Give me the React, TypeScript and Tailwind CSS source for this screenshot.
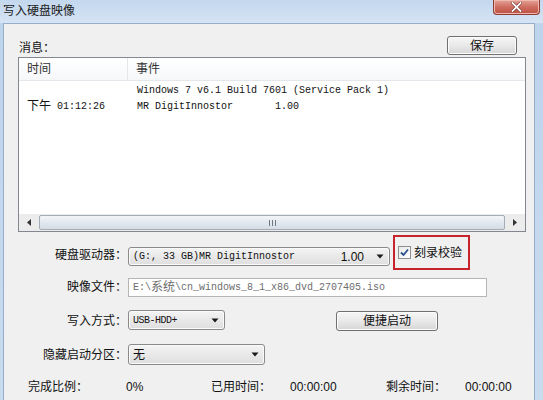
import React from "react";

const UI = { fontFamily: '"Liberation Sans", "Noto Sans CJK SC", sans-serif' };
const MONO = { fontFamily: '"Liberation Mono", "Noto Sans CJK SC", monospace' };

function Arrow() {
  return (
    <svg width="8" height="5" viewBox="0 0 8 5" className="shrink-0">
      <path d="M0.5 0.5 L7.5 0.5 L4 4.5 Z" fill="#1a1a1a" />
    </svg>
  );
}

function Button({ label, className }: { label: string; className: string }) {
  return (
    <div
      className={`flex items-center justify-center rounded-[3px] border border-[#707070] bg-gradient-to-b from-[#f6f6f6] via-[#e9e9e9] to-[#d6d6d6] text-[12px] text-[#111] shadow-[inset_0_0_0_1px_#fcfcfc] ${className}`}
    >
      {label}
    </div>
  );
}

function Select({ children, className }: { children: React.ReactNode; className: string }) {
  return (
    <div
      className={`flex items-center rounded-[3px] border border-[#8a8a8a] bg-gradient-to-b from-[#f4f4f4] to-[#dedede] pl-[4px] pr-[5px] shadow-[inset_0_0_0_1px_#fafafa] ${className}`}
    >
      <div className="flex-1 flex items-center overflow-hidden whitespace-nowrap">{children}</div>
      <Arrow />
    </div>
  );
}

function Label({ text, mt }: { text: string; mt: string }) {
  return (
    <div className={`w-[124px] shrink-0 pr-[1px] text-right text-[12px] leading-[14px] text-[#111] ${mt}`}>
      {text}
    </div>
  );
}

export default function App() {
  return (
    <div className="w-[543px] h-[400px] overflow-hidden flex flex-col bg-gradient-to-b from-[#bdd3ec] to-[#c9dbef]" style={UI}>
      {/* title bar */}
      <div className="h-[23px] flex items-start justify-between bg-gradient-to-b from-[#c3d7ee] to-[#d6e4f4]">
        <div className="pl-[3px] pt-[3px] text-[12px] leading-[16px] text-[#1b1b1b]">写入硬盘映像</div>
        <div className="mr-[3px] w-[47px] h-[15px] rounded-b-[4px] border border-t-0 border-[#8d3b33] bg-gradient-to-b from-[#e4a297] via-[#cf6d61] to-[#bd5044] flex items-center justify-center shadow-[inset_0_0_0_1px_#efb9ae]">
          <svg width="11" height="10" viewBox="0 0 11 10">
            <path d="M1.5 1 L9.5 9 M9.5 1 L1.5 9" stroke="#6b2a24" strokeWidth="3" strokeLinecap="square" />
            <path d="M1.5 1 L9.5 9 M9.5 1 L1.5 9" stroke="#ffffff" strokeWidth="1.8" strokeLinecap="square" />
          </svg>
        </div>
      </div>

      {/* client area */}
      <div className="flex-1 ml-[3px] mr-[8px] border-l border-t border-r border-[#97aecb] bg-[#f0f0f0] flex flex-col">
        <div className="pt-[12px] pl-[15px] pr-[17px] flex items-start justify-between">
          <div className="mt-[5px] text-[12px] leading-[14px] text-[#111]">消息：</div>
          <Button label="保存" className="w-[70px] h-[19px]" />
        </div>

        {/* message list */}
        <div className="mt-[2px] ml-[14px] w-[508px] h-[175px] border border-[#828790] bg-white flex flex-col">
          <div className="h-[23px] shrink-0 flex border-b border-[#e3e6ea] bg-gradient-to-b from-[#ffffff] to-[#f5f7f9] text-[12px] text-[#333]">
            <div className="w-[109px] pl-[8px] flex items-center border-r border-[#e3e6ea]">时间</div>
            <div className="pl-[8px] flex items-center">事件</div>
          </div>
          <div className="flex-1 pt-[2px] text-[10px] leading-[16px] text-[#111]">
            <div className="flex h-[16px]">
              <div className="w-[110px]" />
              <div className="pl-[8px] whitespace-pre" style={MONO}>Windows 7 v6.1 Build 7601 (Service Pack 1)</div>
            </div>
            <div className="flex h-[16px] items-center">
              <div className="w-[110px] pl-[8px] flex items-center whitespace-pre" style={MONO}>
                <span className="text-[12px] leading-[16px]">下午</span>
                <span className="leading-[16px]"> 01:12:26</span>
              </div>
              <div className="pl-[8px] whitespace-pre" style={MONO}>MR DigitInnostor       1.00</div>
            </div>
          </div>
          {/* horizontal scrollbar */}
          <div className="h-[17px] shrink-0 flex bg-[#ececec]">
            <div className="w-[20px] flex items-center justify-center">
              <svg width="4" height="7" viewBox="0 0 4 7"><path d="M4 0 L0 3.5 L4 7 Z" fill="#333" /></svg>
            </div>
            <div className="flex-1 my-[1px] rounded-[2px] border border-[#a3acb7] bg-gradient-to-b from-[#f2f4f7] via-[#e3e8ee] to-[#d5dce5] flex items-center justify-center">
              <svg width="7" height="6" viewBox="0 0 7 6">
                <path d="M0.5 0 V6 M3.5 0 V6 M6.5 0 V6" stroke="#6e7782" strokeWidth="1" />
              </svg>
            </div>
            <div className="w-[20px] flex items-center justify-center">
              <svg width="4" height="7" viewBox="0 0 4 7"><path d="M0 0 L4 3.5 L0 7 Z" fill="#333" /></svg>
            </div>
          </div>
        </div>

        {/* drive row */}
        <div className="mt-[3px] h-[35px] flex items-start">
          <Label text="硬盘驱动器：" mt="mt-[13px]" />
          <Select className="mt-[12px] w-[262px] h-[19px]">
            <span className="text-[10px] whitespace-pre text-[#111]" style={MONO}>(G:, 33 GB)MR DigitInnostor</span>
            <span className="ml-auto mr-[12px] text-[12px] text-[#111]">1.00</span>
          </Select>
          <div className="ml-[3px] w-[77px] h-[35px] border-2 border-[#c8232c] flex items-center pl-[3px]">
            <div className="w-[13px] h-[13px] border border-[#8f8f8f] bg-gradient-to-br from-[#e8e8e8] to-[#ffffff] flex items-center justify-center">
              <svg width="9" height="9" viewBox="0 0 9 9">
                <path d="M1 4.5 L3.5 7 L8 1.5" stroke="#2b4f8a" strokeWidth="1.8" fill="none" />
              </svg>
            </div>
            <span className="ml-[3px] text-[12px] leading-[14px] text-[#111]">刻录校验</span>
          </div>
        </div>

        {/* image file row */}
        <div className="mt-[8px] flex items-start">
          <Label text="映像文件：" mt="mt-[2px]" />
          <div className="w-[359px] h-[19px] border border-[#b5b5b5] bg-white flex items-center pl-[4px] text-[10px] text-[#6d6d6d] whitespace-pre" style={MONO}>
            E:\<span className="text-[12px]">系统</span>\cn_windows_8_1_x86_dvd_2707405.iso
          </div>
        </div>

        {/* write mode row */}
        <div className="mt-[13px] flex items-start">
          <Label text="写入方式：" mt="mt-[4px]" />
          <Select className="w-[97px] h-[20px]">
            <span className="text-[10px] tracking-[-0.5px] text-[#111]" style={MONO}>USB-HDD+</span>
          </Select>
          <Button label="便捷启动" className="ml-[111px] mt-[1px] w-[102px] h-[20px]" />
        </div>

        {/* hidden partition row */}
        <div className="mt-[13px] flex items-start">
          <Label text="隐藏启动分区：" mt="mt-[4px]" />
          <Select className="w-[137px] h-[21px]">
            <span className="text-[12px] text-[#111]">无</span>
          </Select>
        </div>

        {/* progress stats */}
        <div className="mt-[15px] pl-[24px] flex text-[12px] leading-[14px] text-[#111]">
          <span className="w-[98px]">完成比例：</span>
          <span className="w-[85px]">0%</span>
          <span className="w-[79px]">已用时间：</span>
          <span className="w-[96px]">00:00:00</span>
          <span className="w-[79px]">剩余时间：</span>
          <span>00:00:00</span>
        </div>
      </div>
    </div>
  );
}
